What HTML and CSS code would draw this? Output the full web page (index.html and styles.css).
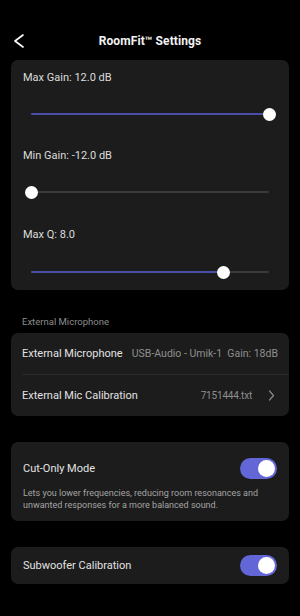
FILE: index.html
```html
<!DOCTYPE html>
<html>
<head>
<meta charset="utf-8">
<link rel="stylesheet" href="styles.css">
</head>
<body>
<div class="screen">
  <header class="topbar">
    <svg class="back" width="12" height="14" viewBox="0 0 12 14"><polyline points="10,1 2,7 10,13" fill="none" stroke="#ffffff" stroke-width="1.6" stroke-linecap="round" stroke-linejoin="round"/></svg>
    <div class="title">RoomFit™ Settings</div>
  </header>

  <section class="card sliders">
    <div class="label">Max Gain: 12.0 dB</div>
    <div class="slider" style="--p:100%"><div class="track"></div><div class="thumb"></div></div>
    <div class="label">Min Gain: -12.0 dB</div>
    <div class="slider" style="--p:0%"><div class="track"></div><div class="thumb"></div></div>
    <div class="label">Max Q: 8.0</div>
    <div class="slider" style="--p:80.7%"><div class="track"></div><div class="thumb"></div></div>
  </section>

  <div class="section-label">External Microphone</div>
  <section class="card list">
    <div class="row">
      <span class="row-title">External Microphone</span>
      <span class="row-value">USB-Audio - Umik-1&nbsp;&nbsp;Gain: 18dB</span>
    </div>
    <div class="divider"></div>
    <div class="row">
      <span class="row-title">External Mic Calibration</span>
      <span class="row-value"><span class="file">7151444.txt</span>
        <svg class="chev" width="7" height="11" viewBox="0 0 7 11"><polyline points="1.5,1 5.5,5.5 1.5,10" fill="none" stroke="#8a8a8a" stroke-width="1.2" stroke-linecap="round" stroke-linejoin="round"/></svg>
      </span>
    </div>
  </section>

  <section class="card toggle-card">
    <div class="toggle-row">
      <span class="row-title">Cut-Only Mode</span>
      <span class="switch"><span class="knob"></span></span>
    </div>
    <p class="desc">Lets you lower frequencies, reducing room resonances and unwanted responses for a more balanced sound.</p>
  </section>

  <section class="card toggle-card single">
    <div class="toggle-row">
      <span class="row-title">Subwoofer Calibration</span>
      <span class="switch"><span class="knob"></span></span>
    </div>
  </section>
</div>
</body>
</html>
```
FILE: styles.css
```css
* { box-sizing: border-box; }
html, body {
  margin: 0;
  padding: 0;
  background: #000;
}
body {
  font-family: Roboto, "Noto Sans", "Liberation Sans", sans-serif;
  color: #e8e8e8;
  width: 300px;
  height: 616px;
  overflow: hidden;
}
.screen {
  display: flex;
  flex-direction: column;
}
.topbar {
  height: 22px;
  margin-top: 30px;
  display: flex;
  align-items: center;
  justify-content: center;
  position: relative;
}
.back {
  position: absolute;
  left: 13px;
  top: 4px;
}
.title {
  font-size: 12px;
  font-weight: 700;
  color: #f2f2f2;
  letter-spacing: 0.1px;
}
.card {
  background: #1c1c1c;
  border-radius: 7px;
  margin: 0 11px;
}
.sliders {
  margin-top: 8px;
  padding: 11px 20px 11px 12px;
  display: flex;
  flex-direction: column;
}
.label {
  font-size: 11px;
  line-height: 14px;
  color: #dcdcdc;
}
.slider {
  position: relative;
  height: 14px;
  margin: 22px 0 28px 8px;
  display: flex;
  align-items: center;
}
.slider:nth-of-type(4) { margin-bottom: 29px; }
.slider:last-child { margin-top: 23px; margin-bottom: 0; }
.track {
  width: 100%;
  height: 2px;
  border-radius: 1px;
  background: linear-gradient(to right, #4a4ea8 var(--p), #3a3a3a var(--p));
}
.thumb {
  position: absolute;
  left: var(--p);
  top: 0.5px;
  width: 13px;
  height: 13px;
  margin-left: -6.5px;
  border-radius: 50%;
  background: #ffffff;
}
.section-label {
  font-size: 9.5px;
  line-height: 12px;
  color: #8c8c8c;
  margin: 26px 0 5px 22px;
}
.list {
  display: flex;
  flex-direction: column;
}
.row {
  height: 41px;
  display: flex;
  align-items: center;
  justify-content: space-between;
  padding: 0 11px;
}
.divider {
  height: 1px;
  background: #2b2b2b;
  margin-left: 11px;
}
.row-title {
  font-size: 11px;
  color: #e2e2e2;
  white-space: nowrap;
}
.row-value {
  font-size: 10.5px;
  color: #8f8f8f;
  white-space: nowrap;
  display: flex;
  align-items: center;
}
.file { font-size: 10px; letter-spacing: -0.2px; }
.chev { margin-left: 16px; margin-right: 3px; }
.toggle-card {
  margin-top: 26px;
  padding: 16px 12px 10px 12px;
}
.toggle-card.single {
  padding: 8px 12px 8px 12px;
}
.toggle-row {
  display: flex;
  align-items: center;
  justify-content: space-between;
}
.switch {
  width: 37px;
  height: 21px;
  border-radius: 11px;
  background: #6366d6;
  display: flex;
  align-items: center;
  justify-content: flex-end;
  padding-right: 2px;
}
.knob {
  width: 17px;
  height: 17px;
  border-radius: 50%;
  background: #ffffff;
}
.desc {
  margin: 8px 0 0 0;
  font-size: 9px;
  line-height: 12px;
  color: #a4a4a4;
}
```
